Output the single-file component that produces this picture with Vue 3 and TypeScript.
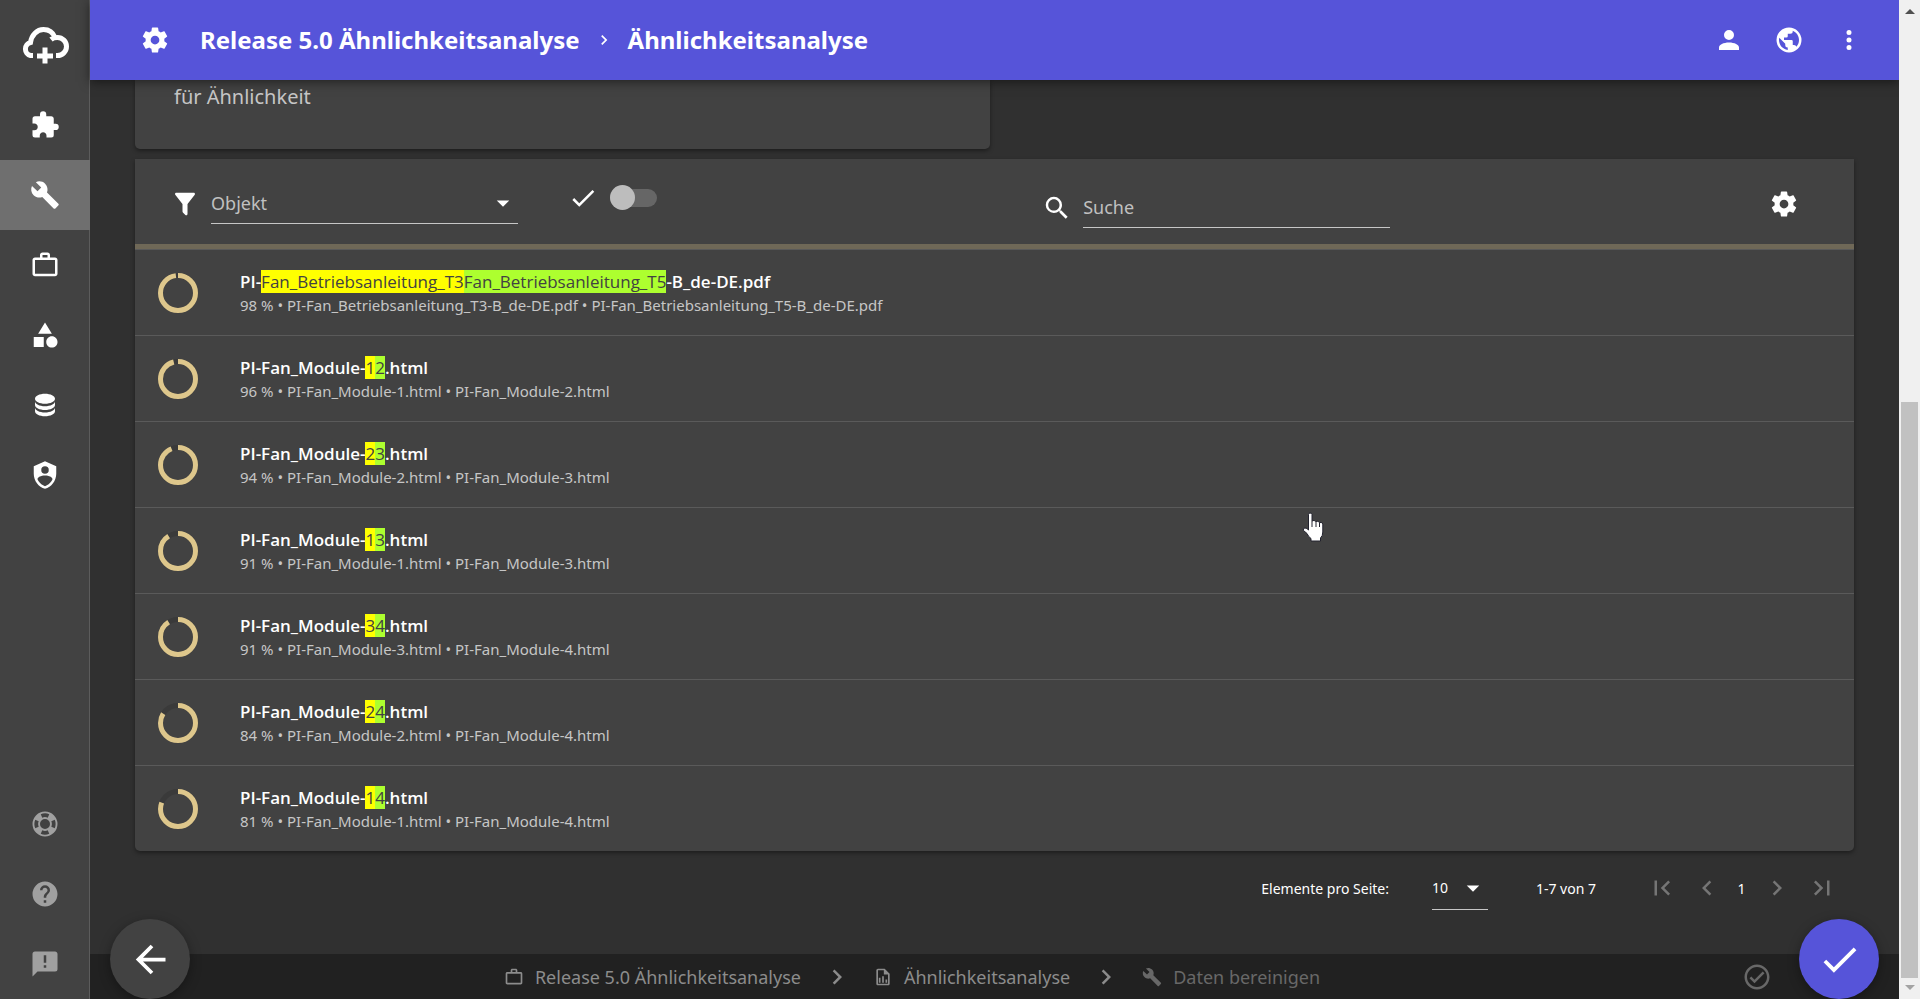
<script setup lang="ts">
import { ref } from 'vue'

interface Match {
  percent: number
  before: string
  first: string
  second: string
  after: string
  files: [string, string]
}

const icons = {
  cog: 'M12,15.5A3.5,3.5 0 0,1 8.5,12A3.5,3.5 0 0,1 12,8.5A3.5,3.5 0 0,1 15.5,12A3.5,3.5 0 0,1 12,15.5M19.43,12.97C19.47,12.65 19.5,12.33 19.5,12C19.5,11.67 19.47,11.34 19.43,11L21.54,9.37C21.73,9.22 21.78,8.95 21.66,8.73L19.66,5.27C19.54,5.05 19.27,4.96 19.05,5.05L16.56,6.05C16.04,5.66 15.5,5.32 14.87,5.07L14.5,2.42C14.46,2.18 14.25,2 14,2H10C9.75,2 9.54,2.18 9.5,2.42L9.13,5.07C8.5,5.32 7.96,5.66 7.44,6.05L4.95,5.05C4.73,4.96 4.46,5.05 4.34,5.27L2.34,8.73C2.21,8.95 2.27,9.22 2.46,9.37L4.57,11C4.53,11.34 4.5,11.67 4.5,12C4.5,12.33 4.53,12.65 4.57,12.97L2.46,14.63C2.27,14.78 2.21,15.05 2.34,15.27L4.34,18.73C4.46,18.95 4.73,19.03 4.95,18.95L7.44,17.94C7.96,18.34 8.5,18.68 9.13,18.93L9.5,21.58C9.54,21.82 9.75,22 10,22H14C14.25,22 14.46,21.82 14.5,21.58L14.87,18.93C15.5,18.67 16.04,18.34 16.56,17.94L19.05,18.95C19.27,19.03 19.54,18.95 19.66,18.73L21.66,15.27C21.78,15.05 21.73,14.78 21.54,14.63L19.43,12.97Z',
  puzzle: 'M20.5,11H19V7C19,5.89 18.1,5 17,5H13V3.5A2.5,2.5 0 0,0 10.5,1A2.5,2.5 0 0,0 8,3.5V5H4A2,2 0 0,0 2,7V10.8H3.5C5,10.8 6.2,12 6.2,13.5C6.2,15 5,16.2 3.5,16.2H2V20A2,2 0 0,0 4,22H7.8V20.5C7.8,19 9,17.8 10.5,17.8C12,17.8 13.2,19 13.2,20.5V22H17A2,2 0 0,0 19,20V16H20.5A2.5,2.5 0 0,0 23,13.5A2.5,2.5 0 0,0 20.5,11Z',
  wrench: 'M22.7,19L13.6,9.9C14.5,7.6 14,4.9 12.1,3C10.1,1 7.1,0.6 4.7,1.7L9,6L6,9L1.6,4.7C0.4,7.1 0.9,10.1 2.9,12.1C4.8,14 7.5,14.5 9.8,13.6L18.9,22.7C19.3,23.1 19.9,23.1 20.3,22.7L22.6,20.4C23.1,20 23.1,19.3 22.7,19Z',
  briefcase: 'M20,6C20.58,6 21.05,6.2 21.42,6.59C21.8,7 22,7.45 22,8V19C22,19.55 21.8,20 21.42,20.41C21.05,20.8 20.58,21 20,21H4C3.42,21 2.95,20.8 2.58,20.41C2.2,20 2,19.55 2,19V8C2,7.45 2.2,7 2.58,6.59C2.95,6.2 3.42,6 4,6H8V4C8,3.42 8.2,2.95 8.58,2.58C8.95,2.2 9.42,2 10,2H14C14.58,2 15.05,2.2 15.42,2.58C15.8,2.95 16,3.42 16,4V6H20M4,8V19H20V8H4M14,6V4H10V6H14Z',
  shape: 'M11,13.5V21.5H3V13.5H11M12,2L17.5,11H6.5L12,2M17.5,13C20,13 22,15 22,17.5C22,20 20,22 17.5,22C15,22 13,20 13,17.5C13,15 15,13 17.5,13Z',
  database: 'M12,3C7.58,3 4,4.79 4,7C4,9.21 7.58,11 12,11C16.42,11 20,9.21 20,7C20,4.79 16.42,3 12,3M4,9V12C4,14.21 7.58,16 12,16C16.42,16 20,14.21 20,12V9C20,11.21 16.42,13 12,13C7.58,13 4,11.21 4,9M4,14V17C4,19.21 7.58,21 12,21C16.42,21 20,19.21 20,17V14C20,16.21 16.42,18 12,18C7.58,18 4,16.21 4,14Z',
  shield: 'M12,1L3,5V11C3,16.55 6.84,21.74 12,23C17.16,21.74 21,16.55 21,11V5L12,1M12,5A3,3 0 0,1 15,8A3,3 0 0,1 12,11A3,3 0 0,1 9,8A3,3 0 0,1 12,5M17.13,17C15.92,18.85 14.11,20.24 12,20.92C9.89,20.24 8.08,18.85 6.87,17C6.53,16.5 6.24,16 6,15.47C6,13.82 8.71,12.47 12,12.47C15.29,12.47 18,13.79 18,15.47C17.76,16 17.47,16.5 17.13,17Z',
  lifebuoy: 'M19.79,15.41C20.74,13.24 20.74,10.75 19.79,8.59L17.05,9.83C17.65,11.21 17.65,12.78 17.06,14.17L19.79,15.41M15.42,4.21C13.25,3.26 10.76,3.26 8.59,4.21L9.83,6.94C11.22,6.35 12.79,6.35 14.18,6.95L15.42,4.21M4.21,8.58C3.26,10.76 3.26,13.24 4.21,15.42L6.95,14.17C6.35,12.79 6.35,11.21 6.95,9.82L4.21,8.58M8.59,19.79C10.76,20.74 13.25,20.74 15.42,19.78L14.18,17.05C12.8,17.65 11.22,17.65 9.84,17.06L8.59,19.79M12,2A10,10 0 0,1 22,12A10,10 0 0,1 12,22A10,10 0 0,1 2,12A10,10 0 0,1 12,2M12,8A4,4 0 0,0 8,12A4,4 0 0,0 12,16A4,4 0 0,0 16,12A4,4 0 0,0 12,8Z',
  help: 'M15.07,11.25L14.17,12.17C13.45,12.89 13,13.5 13,15H11V14.5C11,13.39 11.45,12.39 12.17,11.67L13.41,10.41C13.78,10.05 14,9.55 14,9C14,7.89 13.1,7 12,7A2,2 0 0,0 10,9H8A4,4 0 0,1 12,5A4,4 0 0,1 16,9C16,9.88 15.64,10.67 15.07,11.25M13,19H11V17H13M12,2A10,10 0 0,0 2,12A10,10 0 0,0 12,22A10,10 0 0,0 22,12C22,6.47 17.5,2 12,2Z',
  message: 'M13,11H11V5H13M13,15H11V13H13M20,2H4A2,2 0 0,0 2,4V22L6,18H20A2,2 0 0,0 22,16V4C22,2.89 21.1,2 20,2Z',
  account: 'M12,4A4,4 0 0,1 16,8A4,4 0 0,1 12,12A4,4 0 0,1 8,8A4,4 0 0,1 12,4M12,14C16.42,14 20,15.79 20,18V20H4V18C4,15.79 7.58,14 12,14Z',
  earth: 'M17.9,17.39C17.64,16.59 16.89,16 16,16H15V13A1,1 0 0,0 14,12H8V10H10A1,1 0 0,0 11,9V7H13A2,2 0 0,0 15,5V4.59C17.93,5.77 20,8.64 20,12C20,14.08 19.2,15.97 17.9,17.39M11,19.93C7.05,19.44 4,16.08 4,12C4,11.38 4.08,10.78 4.21,10.21L9,15V16A2,2 0 0,0 11,18M12,2A10,10 0 0,0 2,12A10,10 0 0,0 12,22A10,10 0 0,0 22,12A10,10 0 0,0 12,2Z',
  dots: 'M12,16A2,2 0 0,1 14,18A2,2 0 0,1 12,20A2,2 0 0,1 10,18A2,2 0 0,1 12,16M12,10A2,2 0 0,1 14,12A2,2 0 0,1 12,14A2,2 0 0,1 10,12A2,2 0 0,1 12,10M12,4A2,2 0 0,1 14,6A2,2 0 0,1 12,8A2,2 0 0,1 10,6A2,2 0 0,1 12,4Z',
  filter: 'M14,12V19.88C14.04,20.18 13.94,20.5 13.71,20.71C13.32,21.1 12.69,21.1 12.3,20.71L10.29,18.7C10.06,18.47 9.96,18.16 10,17.87V12H9.97L4.21,4.62C3.87,4.19 3.95,3.56 4.38,3.22C4.57,3.08 4.78,3 5,3H19C19.22,3 19.43,3.08 19.62,3.22C20.05,3.56 20.13,4.19 19.79,4.62L14.03,12H14Z',
  magnify: 'M9.5,3A6.5,6.5 0 0,1 16,9.5C16,11.11 15.41,12.59 14.44,13.73L14.71,14H15.5L20.5,19L19,20.5L14,15.5V14.71L13.73,14.44C12.59,15.41 11.11,16 9.5,16A6.5,6.5 0 0,1 3,9.5A6.5,6.5 0 0,1 9.5,3M9.5,5C7,5 5,7 5,9.5C5,12 7,14 9.5,14C12,14 14,12 14,9.5C14,7 12,5 9.5,5Z',
  check: 'M21,7L9,19L3.5,13.5L4.91,12.09L9,16.17L19.59,5.59L21,7Z',
  arrowLeft: 'M20,11V13H8L13.5,18.5L12.08,19.92L4.16,12L12.08,4.08L13.5,5.5L8,11H20Z',
  caret: 'M7,10L12,15L17,10H7Z',
  pageFirst: 'M18.41,16.59L13.82,12L18.41,7.41L17,6L11,12L17,18L18.41,16.59M6,6H8V18H6V6Z',
  chevronLeft: 'M15.41,16.58L10.83,12L15.41,7.41L14,6L8,12L14,18L15.41,16.58Z',
  chevronRight: 'M8.59,16.58L13.17,12L8.59,7.41L10,6L16,12L10,18L8.59,16.58Z',
  pageLast: 'M5.59,7.41L10.18,12L5.59,16.59L7,18L13,12L7,6L5.59,7.41M16,6H18V18H16V6Z',
  checkCircle: 'M12 2C6.5 2 2 6.5 2 12S6.5 22 12 22 22 17.5 22 12 17.5 2 12 2M12 20C7.59 20 4 16.41 4 12S7.59 4 12 4 20 7.59 20 12 16.41 20 12 20M16.59 7.58L10 14.17L7.41 11.59L6 13L10 17L18 9L16.59 7.58Z',
  fileChart: 'M14,2H6C4.89,2 4,2.9 4,4V20C4,21.1 4.89,22 6,22H18C19.1,22 20,21.1 20,20V8L14,2M18,20H6V4H13V9H18V20M9,13V19H7V13H9M15,15V19H17V15H15M11,11V19H13V11H11Z',
}

const navigation = [
  { label: 'Module', icon: icons.puzzle },
  { label: 'Werkzeuge', icon: icons.wrench, active: true },
  { label: 'Projekte', icon: icons.briefcase },
  { label: 'Kategorien', icon: icons.shape },
  { label: 'Daten', icon: icons.database },
  { label: 'Sicherheit', icon: icons.shield },
]

const support = [
  { label: 'Support', icon: icons.lifebuoy },
  { label: 'Hilfe', icon: icons.help },
  { label: 'Feedback', icon: icons.message },
]

const account = [
  { label: 'Konto', icon: icons.account },
  { label: 'Sprache', icon: icons.earth },
  { label: 'Mehr', icon: icons.dots },
]

const moduleMatch = (percent: number, a: number, b: number): Match => ({
  percent,
  before: 'PI-Fan_Module-',
  first: String(a),
  second: String(b),
  after: '.html',
  files: [`PI-Fan_Module-${a}.html`, `PI-Fan_Module-${b}.html`],
})

const matches: Match[] = [
  {
    percent: 98,
    before: 'PI-',
    first: 'Fan_Betriebsanleitung_T3',
    second: 'Fan_Betriebsanleitung_T5',
    after: '-B_de-DE.pdf',
    files: ['PI-Fan_Betriebsanleitung_T3-B_de-DE.pdf', 'PI-Fan_Betriebsanleitung_T5-B_de-DE.pdf'],
  },
  moduleMatch(96, 1, 2),
  moduleMatch(94, 2, 3),
  moduleMatch(91, 1, 3),
  moduleMatch(91, 3, 4),
  moduleMatch(84, 2, 4),
  moduleMatch(81, 1, 4),
]

const steps = [
  { label: 'Release 5.0 Ähnlichkeitsanalyse', icon: icons.briefcase },
  { label: 'Ähnlichkeitsanalyse', icon: icons.fileChart },
  { label: 'Daten bereinigen', icon: icons.wrench, current: true },
]

const onlyConfirmed = ref(false)
const search = ref('')
const objectType = ref('')
const pageSize = ref(10)
</script>

<template>
  <div class="app">
    <nav class="sidebar" aria-label="Hauptnavigation">
      <a class="logo" href="#" aria-label="Start">
        <svg width="50" height="40" viewBox="0 0 50 40" stroke="#fff" stroke-width="5">
          <path d="M13 30.5H10.500A6.700 6.700 0 0 1 10.500 17.500C11.500 10 17 4.500 23.500 4.500C28.500 4.500 33 7.500 35 12.500" />
          <path d="M31 14.500C33 12.800 35 12.500 37.500 12.500A9 9 0 0 1 37.500 30.500H36" />
          <path d="M25 22.500V38.500M17 31H33" />
        </svg>
      </a>
      <a
        v-for="item in navigation"
        :key="item.label"
        href="#"
        class="nav-item"
        :class="{ active: item.active }"
        :aria-label="item.label"
      >
        <svg class="icon" viewBox="0 0 24 24"><path :d="item.icon" /></svg>
      </a>
      <div class="spacer"></div>
      <a v-for="item in support" :key="item.label" href="#" class="nav-item muted" :aria-label="item.label">
        <svg class="icon" viewBox="0 0 24 24"><path :d="item.icon" /></svg>
      </a>
    </nav>

    <div class="page">
      <header class="topbar">
        <svg class="icon" viewBox="0 0 24 24"><path :d="icons.cog" /></svg>
        <h1 class="title">
          <a href="#">Release 5.0 Ähnlichkeitsanalyse</a>
          <svg class="title-chevron" viewBox="0 0 24 24"><path :d="icons.chevronRight" /></svg>
          <a href="#">Ähnlichkeitsanalyse</a>
        </h1>
        <div class="actions">
          <button v-for="item in account" :key="item.label" type="button" :aria-label="item.label">
            <svg class="icon" viewBox="0 0 24 24"><path :d="item.icon" /></svg>
          </button>
        </div>
      </header>

      <main class="content">
        <section class="card intro"><p>für Ähnlichkeit</p></section>

        <section class="card results">
          <div class="toolbar">
            <div class="field filter">
              <svg class="icon" viewBox="0 0 24 24"><path :d="icons.filter" /></svg>
              <div class="select">
                <select v-model="objectType" aria-label="Objekt">
                  <option value="">Objekt</option>
                </select>
                <svg class="caret" viewBox="0 0 24 24"><path :d="icons.caret" /></svg>
              </div>
            </div>
            <label class="toggle">
              <svg class="icon" viewBox="0 0 24 24"><path :d="icons.check" /></svg>
              <input v-model="onlyConfirmed" type="checkbox" role="switch" aria-label="Nur bestätigte" />
            </label>
            <div class="field search">
              <svg class="icon" viewBox="0 0 24 24"><path :d="icons.magnify" /></svg>
              <input v-model="search" type="text" placeholder="Suche" aria-label="Suche" />
            </div>
            <button type="button" class="settings" aria-label="Einstellungen">
              <svg class="icon" viewBox="0 0 24 24"><path :d="icons.cog" /></svg>
            </button>
          </div>
          <div class="accent"></div>
          <ul class="list">
            <li v-for="match in matches" :key="match.files.join()" class="row">
              <svg class="ring" viewBox="0 0 40 40">
                <circle class="track" cx="20" cy="20" r="17.5" />
                <circle
                  class="value"
                  cx="20"
                  cy="20"
                  r="17.5"
                  pathLength="100"
                  :stroke-dasharray="`${match.percent} 100`"
                  transform="rotate(-90 20 20)"
                />
              </svg>
              <div>
                <div class="name">{{ match.before }}<mark class="first">{{ match.first }}</mark><mark class="second">{{ match.second }}</mark>{{ match.after }}</div>
                <div class="detail">{{ match.percent }} % • {{ match.files[0] }} • {{ match.files[1] }}</div>
              </div>
            </li>
          </ul>
        </section>

        <div class="paginator">
          <label for="page-size">Elemente pro Seite:</label>
          <div class="select size">
            <select id="page-size" v-model="pageSize">
              <option :value="10">10</option>
              <option :value="25">25</option>
            </select>
            <svg class="caret" viewBox="0 0 24 24"><path :d="icons.caret" /></svg>
          </div>
          <span class="range">1-7 von 7</span>
          <div class="pages">
            <button type="button" disabled aria-label="Erste Seite">
              <svg class="icon" viewBox="0 0 24 24"><path :d="icons.pageFirst" /></svg>
            </button>
            <button type="button" disabled aria-label="Vorherige Seite">
              <svg class="icon" viewBox="0 0 24 24"><path :d="icons.chevronLeft" /></svg>
            </button>
            <span class="page-number">1</span>
            <button type="button" disabled aria-label="Nächste Seite">
              <svg class="icon" viewBox="0 0 24 24"><path :d="icons.chevronRight" /></svg>
            </button>
            <button type="button" disabled aria-label="Letzte Seite">
              <svg class="icon" viewBox="0 0 24 24"><path :d="icons.pageLast" /></svg>
            </button>
          </div>
        </div>
      </main>

      <footer class="steps">
        <ol>
          <li v-for="(step, index) in steps" :key="step.label">
            <svg v-if="index" class="icon separator" viewBox="0 0 24 24"><path :d="icons.chevronRight" /></svg>
            <a href="#" :class="{ current: step.current }">
              <svg class="step-icon" viewBox="0 0 24 24"><path fill-rule="evenodd" :d="step.icon" /></svg>
              {{ step.label }}
            </a>
          </li>
        </ol>
        <svg class="icon done" viewBox="0 0 24 24"><path :d="icons.checkCircle" /></svg>
      </footer>

      <button type="button" class="fab back" aria-label="Zurück">
        <svg viewBox="0 0 24 24"><path :d="icons.arrowLeft" /></svg>
      </button>
      <button type="button" class="fab confirm" aria-label="Bestätigen">
        <svg viewBox="0 0 24 24"><path :d="icons.check" /></svg>
      </button>
    </div>

    <div class="scrollbar" aria-hidden="true">
      <svg viewBox="0 0 10 5"><path d="M0 5L5 0L10 5Z" /></svg>
      <div class="thumb"></div>
      <svg viewBox="0 0 10 5"><path d="M0 0L5 5L10 0Z" /></svg>
    </div>

    <svg class="pointer" viewBox="0 0 22 30" aria-hidden="true">
      <path
        d="M6.500 2.500Q6.500 1 8 1Q10 1 10 2.500V9Q12 7.500 14 9.500Q16 8.500 17.500 10.500Q20.500 10 20.800 12V20Q20.800 24 18.500 26V29H9V26.500Q6.500 25 5 21.500L1.500 18.500Q.5 16 3 16Q5 16 6.500 18Z"
        stroke="#22222e"
      />
      <path d="M10 9V15M14 9.500V15M17.500 10.500V15" stroke="#22222e" />
    </svg>
  </div>
</template>

<style>
html,
body {
  margin: 0;
  background: #303030;
}
</style>

<style scoped>
.app {
  position: relative;
  display: flex;
  height: 100vh;
  overflow: hidden;
  background: #303030;
  color: #fff;
  font-family: "Noto Sans", "Open Sans", sans-serif;
  font-size: 14px;
}
* {
  box-sizing: border-box;
}
svg {
  display: block;
  flex: none;
}
svg path {
  fill: currentColor;
}
.logo path {
  fill: none;
}
.pointer path {
  fill: #fff;
}
.pointer path + path {
  fill: none;
}
.scrollbar svg:first-child path {
  fill: #505050;
}
.scrollbar svg:last-child path {
  fill: #a3a3a3;
}
a {
  color: inherit;
  text-decoration: none;
}
button {
  display: flex;
  align-items: center;
  justify-content: center;
  padding: 0;
  border: 0;
  background: none;
  color: inherit;
  font: inherit;
}
.icon {
  width: 30px;
  height: 30px;
}

.sidebar {
  display: flex;
  flex: none;
  flex-direction: column;
  width: 90px;
  border-right: 1px solid #5c5c5c;
  background: #424242;
}
.logo,
.nav-item {
  display: flex;
  align-items: center;
  justify-content: center;
  height: 70px;
  margin-right: -1px;
}
.logo {
  height: 90px;
}
.nav-item.active {
  background: #6f6f6f;
}
.nav-item.muted {
  color: #a0a0a0;
}
.spacer {
  flex: 1;
}

.page {
  position: relative;
  display: flex;
  flex: 1;
  flex-direction: column;
  min-width: 0;
}
.topbar {
  position: relative;
  z-index: 1;
  display: flex;
  flex: none;
  align-items: center;
  gap: 30px;
  height: 80px;
  padding: 0 20px 0 50px;
  background: #5654d9;
  box-shadow: 0 2px 10px rgba(0, 0, 0, 0.5);
}
.title {
  display: flex;
  flex: 1;
  align-items: center;
  gap: 14px;
  margin: 0;
  font-size: 24px;
  font-weight: 700;
  line-height: 32px;
}
.title-chevron {
  width: 20px;
  height: 20px;
}
.actions {
  display: flex;
}
.actions button {
  width: 60px;
  height: 60px;
}

.content {
  flex: 1;
  min-height: 0;
  padding: 0 45px;
  overflow: hidden;
}
.card {
  background: #424242;
  box-shadow: 0 2px 4px rgba(0, 0, 0, 0.4);
}
.intro {
  width: calc(50% - 5px);
  height: 69px;
  margin-bottom: 10px;
  padding: 5px 39px;
  border-radius: 0 0 5px 5px;
  color: #c6c6c6;
  font-size: 20px;
  line-height: 24px;
}
.intro p {
  margin: 0;
}
.results {
  border-radius: 0 0 5px 5px;
}
.toolbar {
  display: grid;
  grid-template-columns: 348px 11fr 348px 9fr;
  align-items: center;
  height: 85px;
  padding: 4px 35px 0;
}
.field {
  display: flex;
  align-items: center;
  gap: 11px;
}
.select {
  display: flex;
  align-items: center;
  flex: 1;
  height: 41px;
  border-bottom: 1px solid #c6c6c6;
}
.select select {
  flex: 1;
  min-width: 0;
  height: 100%;
  padding: 0;
  border: 0;
  appearance: none;
  background: transparent;
  color: #c0c0c0;
  font: inherit;
  font-size: 18px;
}
.caret {
  width: 30px;
  height: 30px;
}
.search {
  padding-top: 8px;
}
.search input {
  flex: 1;
  min-width: 0;
  height: 41px;
  padding: 0;
  border: 0;
  border-bottom: 1px solid #c6c6c6;
  background: transparent;
  color: #fff;
  font: inherit;
  font-size: 18px;
}
.search input::placeholder {
  color: #c0c0c0;
  opacity: 1;
}
.toggle {
  display: flex;
  align-items: center;
  gap: 12px;
  padding: 0 0 12px 50px;
}
.toggle input {
  position: relative;
  width: 47px;
  height: 18px;
  margin: 0;
  border-radius: 9px;
  appearance: none;
  background: #666;
}
.toggle input::before {
  content: "";
  position: absolute;
  top: -4px;
  left: 0;
  width: 25px;
  height: 25px;
  border-radius: 50%;
  background: #bdbdbd;
}
.settings {
  justify-self: end;
  width: 70px;
  height: 70px;
}
.accent {
  height: 5px;
  background: #6f6857;
}
.list {
  margin: 0;
  padding: 0;
  list-style: none;
}
.row {
  display: flex;
  align-items: center;
  gap: 42px;
  height: 86px;
  padding: 0 23px;
  border-top: 1px solid #5a5a5a;
}
.ring {
  width: 40px;
  height: 40px;
}
.ring circle {
  fill: none;
  stroke-width: 5;
}
.ring .track {
  stroke: #3a3a3a;
}
.ring .value {
  stroke: #dec78c;
}
.name {
  font-family: "Open Sans", "Noto Sans", sans-serif;
  font-size: 17px;
  font-weight: 600;
  line-height: 24px;
}
.name mark {
  color: #424242;
  font-weight: 400;
}
.name .first {
  background: #ff0;
}
.name .second {
  background: #adff2f;
}
.detail {
  color: #c6c6c6;
  font-size: 15px;
  line-height: 22px;
}

.paginator {
  display: flex;
  align-items: center;
  justify-content: flex-end;
  height: 74px;
  padding-right: 10px;
}
.select.size {
  flex: none;
  width: 56px;
  height: 43px;
  margin: 0 48px 0 43px;
}
.size select {
  color: #fff;
  font-size: 14px;
}
.pages {
  display: flex;
  align-items: center;
  margin-left: 43px;
  color: #757575;
}
.pages button {
  width: 45px;
  height: 45px;
}
.page-number {
  width: 25px;
  color: #fff;
  text-align: center;
}

.steps {
  display: flex;
  flex: none;
  align-items: center;
  height: 45px;
  padding-right: 127px;
  background: #212121;
  color: #8c8c8c;
}
.steps ol {
  display: flex;
  flex: 1;
  justify-content: center;
  margin: 0;
  padding: 0 8px 0 0;
  list-style: none;
  font-size: 18px;
  line-height: 24px;
}
.steps li,
.steps a {
  display: flex;
  align-items: center;
}
.steps a {
  gap: 11px;
}
.steps .current,
.done {
  color: #686868;
}
.step-icon {
  width: 20px;
  height: 20px;
}
.separator {
  margin: 0 21px;
}
.fab {
  position: absolute;
  bottom: 0;
  z-index: 2;
  width: 80px;
  height: 80px;
  border-radius: 50%;
  box-shadow: 0 3px 12px rgba(0, 0, 0, 0.35);
}
.fab svg {
  width: 45px;
  height: 45px;
}
.back {
  left: 20px;
  background: #424242;
}
.confirm {
  right: 20px;
  background: #5654d9;
}

.scrollbar {
  position: relative;
  z-index: 3;
  display: flex;
  flex: none;
  flex-direction: column;
  align-items: center;
  justify-content: space-between;
  width: 21px;
  padding: 9px 0;
  background: #f0f0f0;
}
.scrollbar svg {
  width: 10px;
  height: 5px;
}
.thumb {
  width: 17px;
  height: calc(58vh - 3px);
  margin-top: auto;
  margin-bottom: 7px;
  background: #c1c1c1;
}
.pointer {
  position: absolute;
  top: 512px;
  left: 1302px;
  width: 22px;
  height: 30px;
}
</style>
